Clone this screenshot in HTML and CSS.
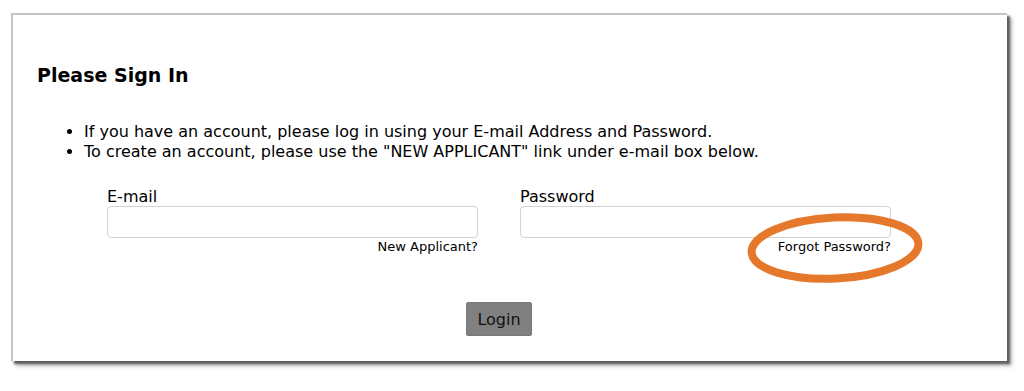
FILE: index.html
```html
<!DOCTYPE html>
<html>
<head>
<meta charset="utf-8">
<link rel="stylesheet" href="styles.css">
</head>
<body>
<div class="page">
<div class="frame">
  <h2 class="title">Please Sign In</h2>
  <ul class="notes">
    <li>If you have an account, please log in using your E-mail Address and Password.</li>
    <li>To create an account, please use the "NEW APPLICANT" link under e-mail box below.</li>
  </ul>
  <div class="fields">
    <div class="field">
      <label class="label">E-mail</label>
      <div class="input"></div>
      <a class="link">New Applicant?</a>
    </div>
    <div class="field">
      <label class="label">Password</label>
      <div class="input"></div>
      <a class="link forgot">Forgot Password?<svg class="circle" width="190" height="80" viewBox="0 0 190 80"><ellipse cx="95" cy="40" rx="83.5" ry="30.5" fill="none" stroke="#e5782a" stroke-width="8" transform="rotate(-3 95 40)"/></svg></a>
    </div>
  </div>
  <div class="actions"><button class="btn">Login</button></div>
</div>
</div>
</body>
</html>
```
FILE: styles.css
```css
html, body { margin: 0; padding: 0; background: #fff; }
body { font-family: "DejaVu Sans", Verdana, sans-serif; color: #000; }
.page { padding: 13px 0 30px 11px; }
.frame {
  box-sizing: border-box;
  width: 996px;
  height: 348px;
  background: #fff;
  border-left: 2px solid #c4c4c4;
  border-top: 2px solid #c4c4c4;
  box-shadow: 3px 3px 2px #5e5e5e, 5px 5px 4px rgba(0,0,0,0.25);
  padding: 0 0 0 24px;
}
.title {
  margin: 0;
  padding-top: 49px;
  font-size: 19px;
  font-weight: bold;
  line-height: 22px;
}
.notes {
  margin: 36px 0 0 0;
  padding-left: 47px;
  font-size: 16px;
  line-height: 20px;
}
.fields {
  display: flex;
  gap: 42px;
  margin: 25px 0 0 70px;
}
.field { display: flex; flex-direction: column; width: 371px; }
.label { font-size: 16px; line-height: 19px; }
.input {
  box-sizing: border-box;
  height: 32px;
  border: 1px solid #d3d3d3;
  border-radius: 4px;
  background: #fff;
}
.link {
  align-self: flex-end;
  font-size: 13px;
  line-height: 18px;
  color: #000;
  position: relative;
}
.circle { position: absolute; left: -38px; top: -30px; }
.actions {
  display: flex;
  justify-content: center;
  margin-top: 46px;
  padding-right: 46px;
}
.btn {
  font-family: "DejaVu Sans", Verdana, sans-serif;
  font-size: 16px;
  width: 66px;
  height: 34px;
  background: #808080;
  color: #111;
  border: 1px solid #7a7a7a;
  border-radius: 2px;
  padding: 0;
}
```
